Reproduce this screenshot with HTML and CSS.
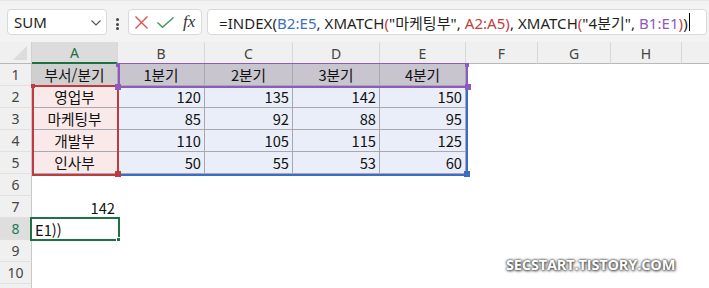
FILE: index.html
```
<!DOCTYPE html>
<html lang="ko">
<head>
<meta charset="utf-8">
<link rel="stylesheet" href="styles.css">
</head>
<body>
<div class="toolbar">
  <div class="namebox">
    <span class="nb-text">SUM</span>
    <svg class="chev" width="10" height="6" viewBox="0 0 10 6"><polyline points="0.5,0.5 5,5 9.5,0.5" fill="none" stroke="#555" stroke-width="1.2"/></svg>
  </div>
  <div class="dots"><i></i><i></i><i></i></div>
  <div class="iconbox">
    <svg class="ic-x" width="13" height="13" viewBox="0 0 13 13"><path d="M0.5 0.5 L12.5 12.5 M12.5 0.5 L0.5 12.5" stroke="#e0504a" stroke-width="1.4" fill="none"/></svg>
    <svg class="ic-ok" width="17" height="11" viewBox="0 0 17 11"><polyline points="0.5,5.5 5.5,10.3 16.5,0.5" fill="none" stroke="#3b9a57" stroke-width="1.4"/></svg>
    <span class="fx">fx</span>
  </div>
  <div class="formula"><span class="f-txt">=INDEX(<span class="c-blue">B2:E5</span>, XMATCH<span class="c-red">(</span>"마케팅부", <span class="c-red">A2:A5)</span>, XMATCH<span class="c-red">(</span>"4분기", <span class="c-purple">B1:E1</span><span class="c-red">)</span>)</span><span class="caret"></span></div>
</div>

<div class="sheet">
  <div class="corner"><span class="tri"></span></div>
  <div class="ch sel">A</div><div class="ch">B</div><div class="ch">C</div><div class="ch">D</div><div class="ch">E</div><div class="ch">F</div><div class="ch">G</div><div class="ch">H</div><div class="ch last"></div>

  <div class="rh">1</div>
  <div class="c t a1 ctr">부서/분기</div><div class="c t hd ctr">1분기</div><div class="c t hd ctr">2분기</div><div class="c t hd ctr">3분기</div><div class="c t hd ctr">4분기</div><div class="c"></div><div class="c"></div><div class="c"></div><div class="c"></div>

  <div class="rh">2</div>
  <div class="c t dep ctr">영업부</div><div class="c t val">120</div><div class="c t val">135</div><div class="c t val">142</div><div class="c t val">150</div><div class="c"></div><div class="c"></div><div class="c"></div><div class="c"></div>

  <div class="rh">3</div>
  <div class="c t dep ctr">마케팅부</div><div class="c t val">85</div><div class="c t val">92</div><div class="c t val">88</div><div class="c t val">95</div><div class="c"></div><div class="c"></div><div class="c"></div><div class="c"></div>

  <div class="rh">4</div>
  <div class="c t dep ctr">개발부</div><div class="c t val">110</div><div class="c t val">105</div><div class="c t val">115</div><div class="c t val">125</div><div class="c"></div><div class="c"></div><div class="c"></div><div class="c"></div>

  <div class="rh">5</div>
  <div class="c t dep ctr">인사부</div><div class="c t val">50</div><div class="c t val">55</div><div class="c t val">53</div><div class="c t val">60</div><div class="c"></div><div class="c"></div><div class="c"></div><div class="c"></div>

  <div class="rh">6</div>
  <div class="c"></div><div class="c"></div><div class="c"></div><div class="c"></div><div class="c"></div><div class="c"></div><div class="c"></div><div class="c"></div><div class="c"></div>

  <div class="rh">7</div>
  <div class="c num">142</div><div class="c"></div><div class="c"></div><div class="c"></div><div class="c"></div><div class="c"></div><div class="c"></div><div class="c"></div><div class="c"></div>

  <div class="rh rsel">8</div>
  <div class="c edit">E1))</div><div class="c"></div><div class="c"></div><div class="c"></div><div class="c"></div><div class="c"></div><div class="c"></div><div class="c"></div><div class="c"></div>

  <div class="rh">9</div>
  <div class="c"></div><div class="c"></div><div class="c"></div><div class="c"></div><div class="c"></div><div class="c"></div><div class="c"></div><div class="c"></div><div class="c"></div>

  <div class="rh">10</div>
  <div class="c"></div><div class="c"></div><div class="c"></div><div class="c"></div><div class="c"></div><div class="c"></div><div class="c"></div><div class="c"></div><div class="c"></div>

  <div class="rh rh-stub"></div>

  <div class="rng blue-rng"></div>
  <div class="rng red-rng"></div>
  <div class="rng purple-rng"></div>
  <div class="hdl h-red1"></div>
  <div class="hdl h-red2"></div>
  <div class="hdl h-blue"></div>
  <div class="hdl h-p1"></div>
  <div class="hdl h-p2"></div>
  <div class="hdl h-p3"></div>
  <div class="hdl h-p4"></div>
  <div class="selbox"></div>
  <div class="hdl h-sel"></div>

  <div class="watermark">SECSTART.TISTORY.COM</div>
</div>
</body>
</html>
```
FILE: styles.css
```
* { box-sizing: border-box; }
html, body { margin: 0; padding: 0; }
body {
  width: 709px;
  height: 288px;
  overflow: hidden;
  background: #ffffff;
  font-family: "Noto Sans", "Noto Sans CJK KR", sans-serif;
}

/* ---------- toolbar ---------- */
.toolbar {
  height: 42px;
  background: #f3f3f3;
  border-top: 1px solid #e6e6e6;
  display: flex;
  align-items: flex-start;
  padding: 8px 2px 0 7px;
}
.namebox {
  width: 100px;
  height: 26px;
  background: #fff;
  border: 1px solid #d9d9d9;
  border-radius: 4px;
  display: flex;
  align-items: center;
  justify-content: space-between;
  padding: 0 5px 0 6px;
}
.nb-text {
  font-size: 15px;
  color: #1f1f1f;
  font-family: "Noto Sans", sans-serif;
}
.chev { margin-top: 1px; }
.dots {
  width: 3px;
  margin: 9px 9px 0 9px;
  display: flex;
  flex-direction: column;
  gap: 1.5px;
}
.dots i {
  display: block;
  width: 3px;
  height: 3px;
  border-radius: 50%;
  background: #444;
}
.iconbox {
  width: 74px;
  height: 26px;
  background: #fff;
  border: 1px solid #d9d9d9;
  border-radius: 4px;
  display: flex;
  align-items: center;
  padding: 0 0 0 6px;
}
.ic-x { margin-right: 9px; }
.ic-ok { margin-right: 9px; }
.fx {
  font-family: "Liberation Serif", serif;
  font-style: italic;
  font-size: 17px;
  color: #333;
  line-height: 1;
  margin-top: -2px;
}
.formula {
  flex: 1;
  margin-left: 5px;
  height: 26px;
  background: #fff;
  border: 1px solid #d9d9d9;
  border-radius: 4px;
  display: flex;
  align-items: center;
  padding-left: 11px;
  white-space: nowrap;
  overflow: hidden;
}
.f-txt {
  font-family: "Noto Sans", "Noto Sans CJK KR", sans-serif;
  font-size: 15px;
  color: #1f1f1f;
  letter-spacing: 0.05px;
}
.c-blue { color: #3b6fc3; }
.c-red { color: #c0413a; }
.c-purple { color: #8e5ac0; }
.caret {
  display: inline-block;
  width: 1px;
  height: 18px;
  background: #000;
  margin-left: 1px;
}

/* ---------- sheet ---------- */
.sheet {
  position: relative;
  display: grid;
  grid-template-columns: 32px 86px 87px 88px 87px 86px 72px 73px 71px 1fr;
  grid-template-rows: 22px repeat(10, 22px) 4px;
}
.corner {
  background: #f0f0f0;
  border-right: 1px solid #d0d0d0;
  border-bottom: 1px solid #b8b8b8;
  position: relative;
}
.tri {
  position: absolute;
  right: 4px;
  bottom: 3px;
  width: 0;
  height: 0;
  border-left: 14px solid transparent;
  border-bottom: 14px solid #dcdcdc;
}
.ch {
  background: #f0f0f0;
  border-right: 1px solid #d8d8d8;
  border-bottom: 1px solid #b8b8b8;
  display: flex;
  align-items: center;
  justify-content: center;
  font-family: "Noto Sans", sans-serif;
  font-size: 14px;
  color: #444;
  padding-top: 1px;
}
.ch.sel {
  background: #dcdcdc;
  color: #1e6e41;
  border-bottom: 2px solid #1e7145;
}
.ch.last { border-right: none; }
.rh {
  background: #f0f0f0;
  border-right: 1px solid #c8c8c8;
  border-bottom: 1px solid #e0e0e0;
  display: flex;
  align-items: center;
  justify-content: center;
  font-family: "Noto Sans", sans-serif;
  font-size: 14px;
  color: #444;
}
.rh-stub { border-bottom: none; }
.rh.rsel {
  background: #dedede;
  color: #1e7a5a;
}
.c {
  display: flex;
  align-items: center;
  font-family: "Noto Sans CJK KR", sans-serif;
  font-size: 14.7px;
  color: #111;
  white-space: nowrap;
  padding: 0 3px;
}
.c.t {
  border-right: 1px solid #a8a8b0;
  border-bottom: 1px solid #a8a8b0;
}
.ctr { justify-content: center; }
.val, .num { justify-content: flex-end; }
.a1 { background: #d0cfcf; }
.hd { background: #c8c5cf; }
.dep { background: #fae9e9; }
.val { background: #eaeef8; }
.edit { padding-left: 3px; }

/* range highlights (overlays) */
.rng { position: absolute; pointer-events: none; }
.purple-rng {
  left: 118px; top: 21px; width: 350px; height: 25px;
  border: 2px solid #8d5bbf;
  border-top-width: 1px;
}
.red-rng {
  left: 32px; top: 43px; width: 87px; height: 91px;
  border: 2px solid #c03a3e;
}
.blue-rng {
  left: 119px; top: 46px; width: 349px; height: 88px;
  border-right: 2px solid #3a6ec6;
  border-bottom: 2px solid #3a6ec6;
}
.hdl { position: absolute; }
.h-red1 { left: 31px; top: 42px; width: 4px; height: 4px; background: #c03a3e; }
.h-red2 { left: 115px; top: 129px; width: 6px; height: 6px; background: #c03a3e; }
.h-blue { left: 464px; top: 129px; width: 6px; height: 6px; background: #3a6ec6; }
.h-p1 { left: 116px; top: 21px; width: 4px; height: 4px; background: #8d5bbf; }
.h-p2 { left: 465px; top: 21px; width: 4px; height: 4px; background: #8d5bbf; }
.h-p3 { left: 115px; top: 42px; width: 6px; height: 6px; background: #8d5bbf; }
.h-p4 { left: 465px; top: 42px; width: 6px; height: 6px; background: #8d5bbf; }
.selbox {
  position: absolute;
  left: 30px; top: 175px; width: 90px; height: 24px;
  border: 2px solid #1e7145;
}
.h-sel { left: 116px; top: 195px; width: 5px; height: 5px; background: #1e7145; border: 1px solid #fff; }

.watermark {
  position: absolute;
  left: 506px;
  top: 213px;
  font-family: "Open Sans", sans-serif;
  font-weight: 700;
  font-size: 14.5px;
  letter-spacing: -0.15px;
  color: #ffffff;
  text-shadow: 0 0 2px #4a4a4a, 0 0 3px #4a4a4a, 1px 1px 3px #666;
}
```
